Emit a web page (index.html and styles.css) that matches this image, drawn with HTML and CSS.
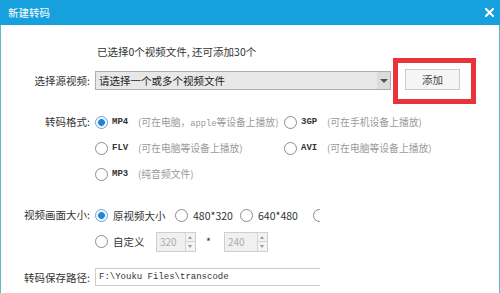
FILE: index.html
```html
<!DOCTYPE html>
<html lang="zh-CN">
<head>
    <meta charset="UTF-8">
    <title>新建转码</title>
    <link rel="stylesheet" href="styles.css">
</head>
<body>
    <div class="dialog">
        <div class="titlebar">
            <span class="title">新建转码</span>
            <svg class="close" width="9" height="9" viewBox="0 0 9 9">
                <path d="M1 1 L8 8 M8 1 L1 8" stroke="#fff" stroke-width="2" stroke-linecap="square"/>
            </svg>
        </div>

        <div class="content">
            <p class="info">已选择0个视频文件, 还可添加30个</p>

            <div class="row source-row">
                <label class="label">选择源视频:</label>
                <div class="select">
                    <span class="select-text">请选择一个或多个视频文件</span>
                    <span class="select-arrow"></span>
                </div>
                <div class="add-wrap">
                    <button class="add-btn">添加</button>
                    <span class="highlight"></span>
                </div>
            </div>

            <div class="format-block">
                <div class="label">转码格式:</div>
                <div class="format-grid">
                    <div class="option">
                        <span class="radio checked"></span>
                        <span class="fmt">MP4</span>
                        <span class="hint">(可在电脑，<span class="latin">apple</span>等设备上播放)</span>
                    </div>
                    <div class="option">
                        <span class="radio"></span>
                        <span class="fmt">3GP</span>
                        <span class="hint">(可在手机设备上播放)</span>
                    </div>
                    <div class="option">
                        <span class="radio"></span>
                        <span class="fmt">FLV</span>
                        <span class="hint">(可在电脑等设备上播放)</span>
                    </div>
                    <div class="option">
                        <span class="radio"></span>
                        <span class="fmt">AVI</span>
                        <span class="hint">(可在电脑等设备上播放)</span>
                    </div>
                    <div class="option">
                        <span class="radio"></span>
                        <span class="fmt">MP3</span>
                        <span class="hint">(纯音频文件)</span>
                    </div>
                </div>
            </div>

            <div class="lower">
                <div class="size-block">
                    <div class="label">视频画面大小:</div>
                    <div class="size-rows">
                        <div class="size-line">
                            <div class="size-opt w80"><span class="radio checked"></span><span>原视频大小</span></div>
                            <div class="size-opt w65"><span class="radio"></span><span>480*320</span></div>
                            <div class="size-opt w73"><span class="radio"></span><span>640*480</span></div>
                            <div class="size-opt"><span class="radio"></span></div>
                        </div>
                        <div class="size-line">
                            <div class="size-opt custom"><span class="radio"></span><span>自定义</span></div>
                            <div class="spin">
                                <span class="spin-value">320</span>
                                <span class="spin-btns"><span class="spin-up"></span><span class="spin-down"></span></span>
                            </div>
                            <span class="times">*</span>
                            <div class="spin">
                                <span class="spin-value">240</span>
                                <span class="spin-btns"><span class="spin-up"></span><span class="spin-down"></span></span>
                            </div>
                        </div>
                    </div>
                </div>

                <div class="row path-row">
                    <label class="label">转码保存路径:</label>
                    <div class="path-input">F:\Youku Files\transcode</div>
                </div>
            </div>
        </div>
    </div>
</body>
</html>
```

FILE: styles.css
```css
* {
    box-sizing: border-box;
}

body {
    margin: 0;
    width: 500px;
    height: 293px;
    overflow: hidden;
    background-color: #fff;
    font-family: "Noto Sans CJK SC", sans-serif;
    font-size: 10.5px;
    color: #333;
}

.dialog {
    height: 293px;
    border-left: 1px solid #62b8cb;
    border-right: 1px solid #62b8cb;
}

.titlebar {
    height: 25px;
    margin: 0 -1px;
    background-color: #17a0de;
    color: #fff;
    display: flex;
    align-items: center;
    justify-content: space-between;
    padding: 0 6px 0 8px;
}

.title {
    font-size: 10.5px;
}

.close {
    display: block;
}

.info {
    margin: 19px 0 0 96px;
    height: 16px;
    line-height: 16px;
}

.row {
    display: flex;
    align-items: center;
}

.label {
    width: 89px;
    flex: none;
    text-align: right;
    margin-right: 5px;
    white-space: nowrap;
}

.source-row {
    margin-top: 10px;
    height: 21px;
}

.select {
    width: 296px;
    height: 19px;
    border: 1px solid #adadad;
    background-color: #e8e8e8;
    display: flex;
    align-items: center;
    justify-content: space-between;
}

.select-text {
    padding-left: 3px;
    color: #222;
}

.select-arrow {
    width: 13px;
    height: 17px;
    background-color: #dcdcdc;
    position: relative;
}

.select-arrow::after {
    content: "";
    position: absolute;
    left: 3px;
    top: 7px;
    border-left: 4px solid transparent;
    border-right: 4px solid transparent;
    border-top: 4px solid #555;
}

.add-wrap {
    position: relative;
    margin-left: 14px;
    margin-top: -3px;
}

.add-btn {
    display: block;
    width: 55px;
    height: 21px;
    padding: 0;
    border: 1px solid #cbcbcb;
    background-color: #f5f5f5;
    font-family: "Noto Sans CJK SC", sans-serif;
    font-size: 10.5px;
    color: #444;
}

.highlight {
    position: absolute;
    left: -12px;
    top: -11px;
    width: 83px;
    height: 46px;
    border: 5px solid #e9333a;
}

.format-block {
    display: flex;
    margin-top: 18px;
}

.format-block .label,
.size-block .label {
    height: 26px;
    line-height: 26px;
}

.format-grid {
    display: grid;
    grid-template-columns: 189px auto;
    grid-auto-rows: 26px;
}

.option {
    display: flex;
    align-items: center;
    white-space: nowrap;
}

.radio {
    flex: none;
    width: 13px;
    height: 13px;
    border: 1px solid #8c8c8c;
    border-radius: 50%;
    background-color: #fff;
    margin-right: 4px;
}

.radio.checked {
    border-color: #6d9ec8;
    background: radial-gradient(circle, #1b86dc 0, #1b86dc 3px, #bcdcf4 3.6px, #fff 4.6px);
}

.fmt {
    width: 26px;
    font-family: "Liberation Mono", monospace;
    font-size: 9px;
    font-weight: bold;
    color: #333;
}

.hint {
    color: #9a9a9a;
    font-size: 9.8px;
}

.latin {
    font-family: "Liberation Mono", monospace;
    font-size: 8.7px;
}

.lower {
    width: 319px;
    overflow: hidden;
}

.size-block {
    display: flex;
    margin-top: 15px;
}

.size-rows {
    display: flex;
    flex-direction: column;
}

.size-line {
    display: flex;
    align-items: center;
    height: 26px;
    white-space: nowrap;
}

.size-opt {
    display: flex;
    align-items: center;
    flex: none;
}

.size-opt .radio {
    margin-right: 5px;
}

.w80 { width: 80px; }
.w65 { width: 65px; }
.w73 { width: 73px; }

.custom {
    width: 61px;
}

.spin {
    width: 40px;
    height: 20px;
    border: 1px solid #cfcfcf;
    background-color: #f0f0f0;
    display: flex;
    justify-content: space-between;
    margin-top: 1px;
}

.spin + .times + .spin {
    width: 44px;
}

.spin-value {
    padding-left: 3px;
    line-height: 18px;
    color: #ababab;
    font-size: 10px;
}

.spin-btns {
    width: 10px;
    display: flex;
    flex-direction: column;
    border-left: 1px solid #d4d4d4;
}

.spin-up,
.spin-down {
    flex: 1;
    position: relative;
    background-color: #f3f3f3;
}

.spin-up {
    border-bottom: 1px solid #d4d4d4;
}

.spin-up::after,
.spin-down::after {
    content: "";
    position: absolute;
    left: 2px;
    top: 3px;
    border-left: 2.5px solid transparent;
    border-right: 2.5px solid transparent;
}

.spin-up::after {
    border-bottom: 3px solid #999;
}

.spin-down::after {
    border-top: 3px solid #999;
}

.times {
    width: 28px;
    text-align: center;
    padding-right: 3px;
}

.path-row {
    margin-top: 14px;
    height: 18px;
}

.path-input {
    width: 240px;
    height: 18px;
    border: 1px solid #cdcdcd;
    border-right: none;
    padding-left: 3px;
    line-height: 16px;
    font-family: "Liberation Mono", monospace;
    font-size: 9px;
    color: #333;
    white-space: nowrap;
}
```
